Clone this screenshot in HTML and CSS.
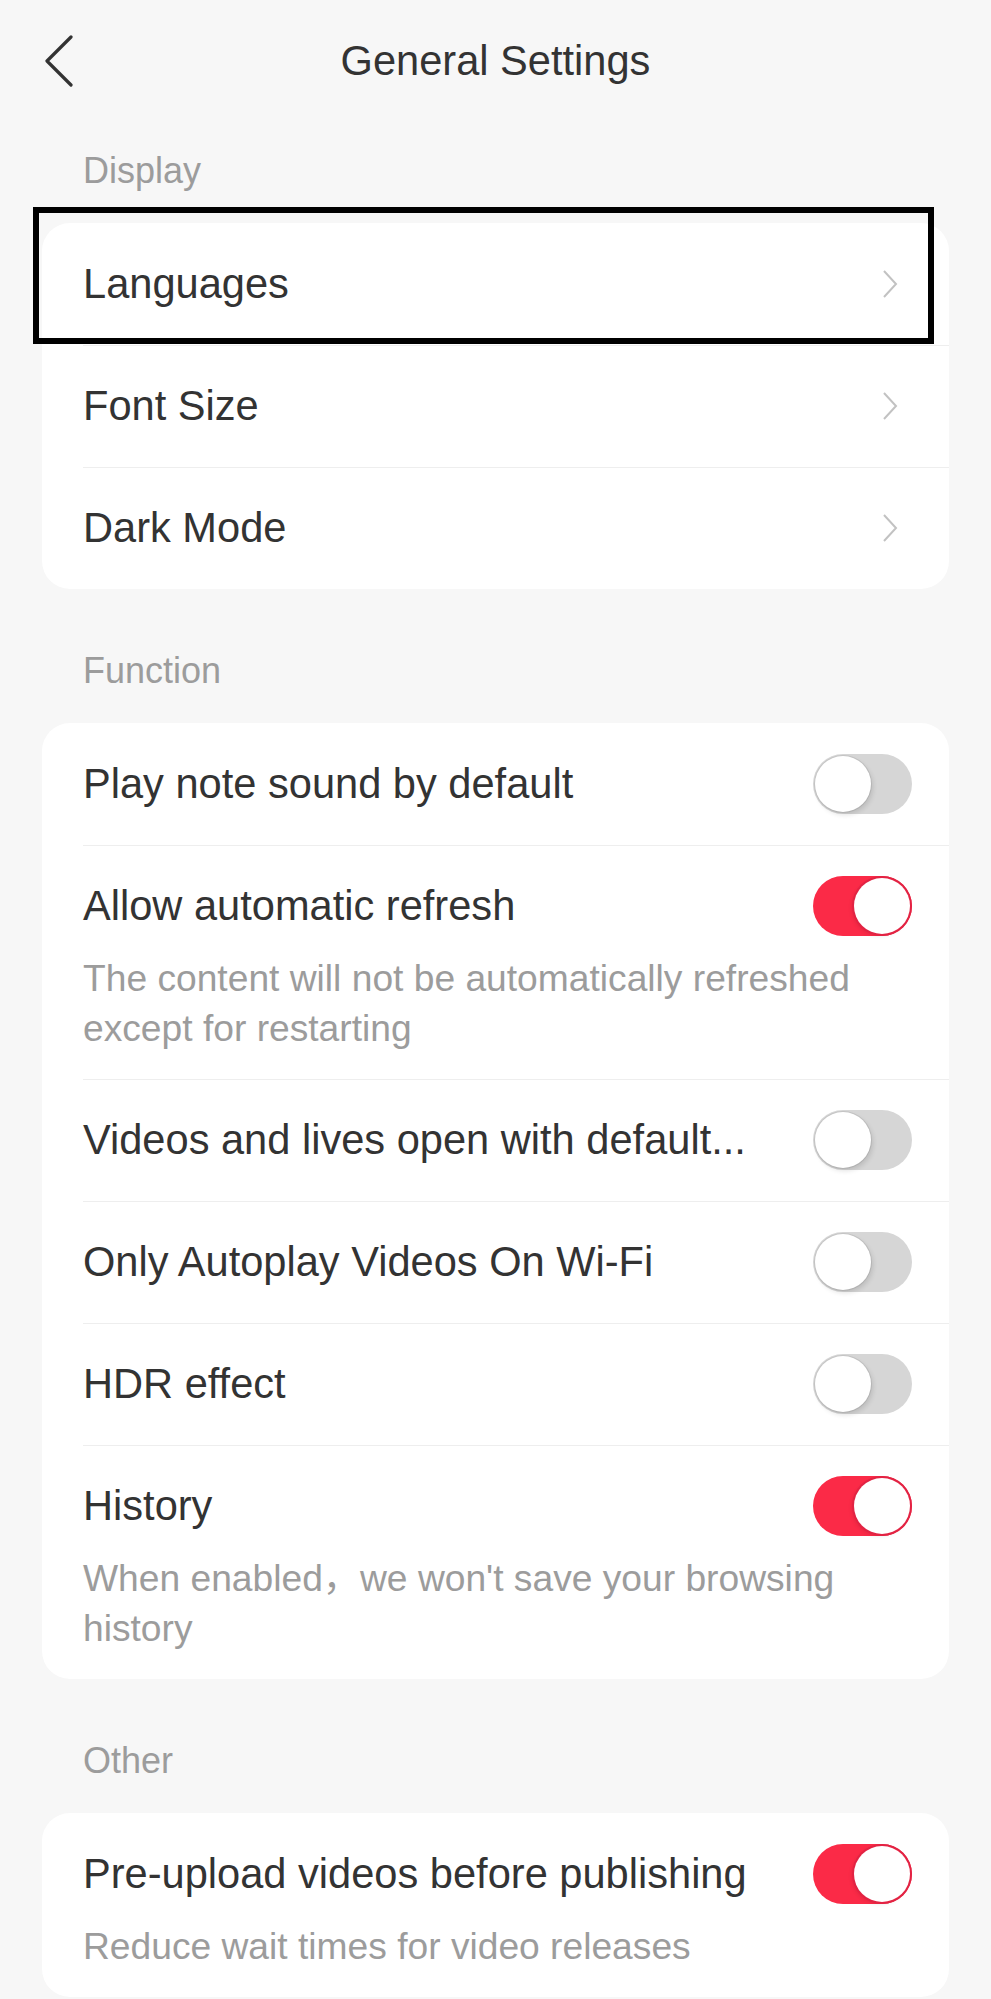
FILE: index.html
```html
<!DOCTYPE html>
<html lang="en">

<head>
    <meta charset="utf-8" />
    <meta name="viewport" content="width=device-width, initial-scale=1">
    <title>General Settings</title>
    <link rel="stylesheet" href="styles.css">
</head>

<body>
    <header class="topbar">
        <button class="back" aria-label="Back">
            <svg width="30" height="52" viewBox="0 0 30 52">
                <polyline points="26,2 2,26 26,50" fill="none" stroke="#333" stroke-width="3.2"
                    stroke-linecap="round" stroke-linejoin="round" />
            </svg>
        </button>
        <h1>General Settings</h1>
    </header>

    <main>
        <h2 class="section-label first">Display</h2>
        <section class="card">
            <div class="row">
                <span class="highlight"></span>
                <div class="row-main">
                    <span class="row-title">Languages</span>
                    <svg class="arrow" width="16" height="28" viewBox="0 0 16 28">
                        <polyline points="2,1 14,14 2,27" fill="none" stroke="#c2c2c2" stroke-width="2" />
                    </svg>
                </div>
            </div>
            <div class="row">
                <div class="row-main">
                    <span class="row-title">Font Size</span>
                    <svg class="arrow" width="16" height="28" viewBox="0 0 16 28">
                        <polyline points="2,1 14,14 2,27" fill="none" stroke="#c2c2c2" stroke-width="2" />
                    </svg>
                </div>
            </div>
            <div class="row">
                <div class="row-main">
                    <span class="row-title">Dark Mode</span>
                    <svg class="arrow" width="16" height="28" viewBox="0 0 16 28">
                        <polyline points="2,1 14,14 2,27" fill="none" stroke="#c2c2c2" stroke-width="2" />
                    </svg>
                </div>
            </div>
        </section>

        <h2 class="section-label">Function</h2>
        <section class="card">
            <div class="row">
                <div class="row-main">
                    <span class="row-title">Play note sound by default</span>
                    <span class="toggle"></span>
                </div>
            </div>
            <div class="row has-desc">
                <div class="row-main">
                    <span class="row-title">Allow automatic refresh</span>
                    <span class="toggle on"></span>
                </div>
                <p class="row-desc">The content will not be automatically refreshed except for restarting</p>
            </div>
            <div class="row">
                <div class="row-main">
                    <span class="row-title">Videos and lives open with default...</span>
                    <span class="toggle"></span>
                </div>
            </div>
            <div class="row">
                <div class="row-main">
                    <span class="row-title">Only Autoplay Videos On Wi-Fi</span>
                    <span class="toggle"></span>
                </div>
            </div>
            <div class="row">
                <div class="row-main">
                    <span class="row-title">HDR effect</span>
                    <span class="toggle"></span>
                </div>
            </div>
            <div class="row has-desc">
                <div class="row-main">
                    <span class="row-title">History</span>
                    <span class="toggle on"></span>
                </div>
                <p class="row-desc">When enabled，we won't save your browsing history</p>
            </div>
        </section>

        <h2 class="section-label">Other</h2>
        <section class="card">
            <div class="row has-desc">
                <div class="row-main">
                    <span class="row-title">Pre-upload videos before publishing</span>
                    <span class="toggle on"></span>
                </div>
                <p class="row-desc">Reduce wait times for video releases</p>
            </div>
        </section>
    </main>
</body>

</html>
```

FILE: styles.css
```css
:root {
    --bg-color: #f7f7f7;
    --card-color: #ffffff;
    --text-color: #333333;
    --muted-color: #9c9c9c;
    --line-color: #eeeeee;
    --accent-color: #fb2a47;
    --track-color: #d6d6d6;
}

* {
    box-sizing: border-box;
}

body {
    margin: 0;
    font-family: "Liberation Sans", Arial, "Noto Sans CJK SC", sans-serif;
    color: var(--text-color);
    background-color: var(--bg-color);
}

.topbar {
    height: 122px;
    display: flex;
    align-items: center;
    justify-content: center;
    position: relative;
}

.topbar h1 {
    margin: 0;
    font-size: 41.6px;
    font-weight: 400;
    color: var(--text-color);
}

.back {
    position: absolute;
    left: 45px;
    top: 35px;
    padding: 0;
    border: 0;
    background: none;
    display: flex;
}

main {
    padding: 0 42px;
}

.section-label {
    margin: 0;
    padding: 62px 41px 32px;
    font-size: 36px;
    line-height: 40px;
    font-weight: 400;
    color: var(--muted-color);
}

.section-label.first {
    padding-top: 29px;
}

.card {
    background-color: var(--card-color);
    border-radius: 28px;
}

.row {
    position: relative;
    margin-left: 41px;
    padding: 36px 37px 36px 0;
}

.row + .row {
    border-top: 1px solid var(--line-color);
    padding-top: 35px;
}

.row.has-desc {
    padding-bottom: 26px;
}

.row-main {
    height: 50px;
    display: flex;
    align-items: center;
    justify-content: space-between;
}

.row-title {
    font-size: 41.6px;
    line-height: 50px;
    white-space: nowrap;
}

.row-desc {
    margin: 22px 0 0;
    font-size: 37.2px;
    line-height: 50px;
    color: var(--muted-color);
}

.arrow {
    margin-right: 14px;
}

.toggle {
    flex: none;
    width: 99px;
    height: 60px;
    border-radius: 30px;
    background-color: var(--track-color);
    position: relative;
}

.toggle::after {
    content: "";
    position: absolute;
    top: 2px;
    left: 2px;
    width: 56px;
    height: 56px;
    border-radius: 50%;
    background-color: #fff;
    box-shadow: 0 0 0 1px rgba(0, 0, 0, 0.08), 2px 3px 5px rgba(0, 0, 0, 0.12);
}

.toggle.on {
    background-color: var(--accent-color);
}

.toggle.on::after {
    left: 41px;
    box-shadow: 0 0 0 2px #e22343, -2px 2px 4px rgba(0, 0, 0, 0.1);
}

/* annotation frame drawn over the first row */
.highlight {
    position: absolute;
    left: -50px;
    top: -16px;
    width: 901px;
    height: 137px;
    border: 6px solid #000;
    pointer-events: none;
}
```
